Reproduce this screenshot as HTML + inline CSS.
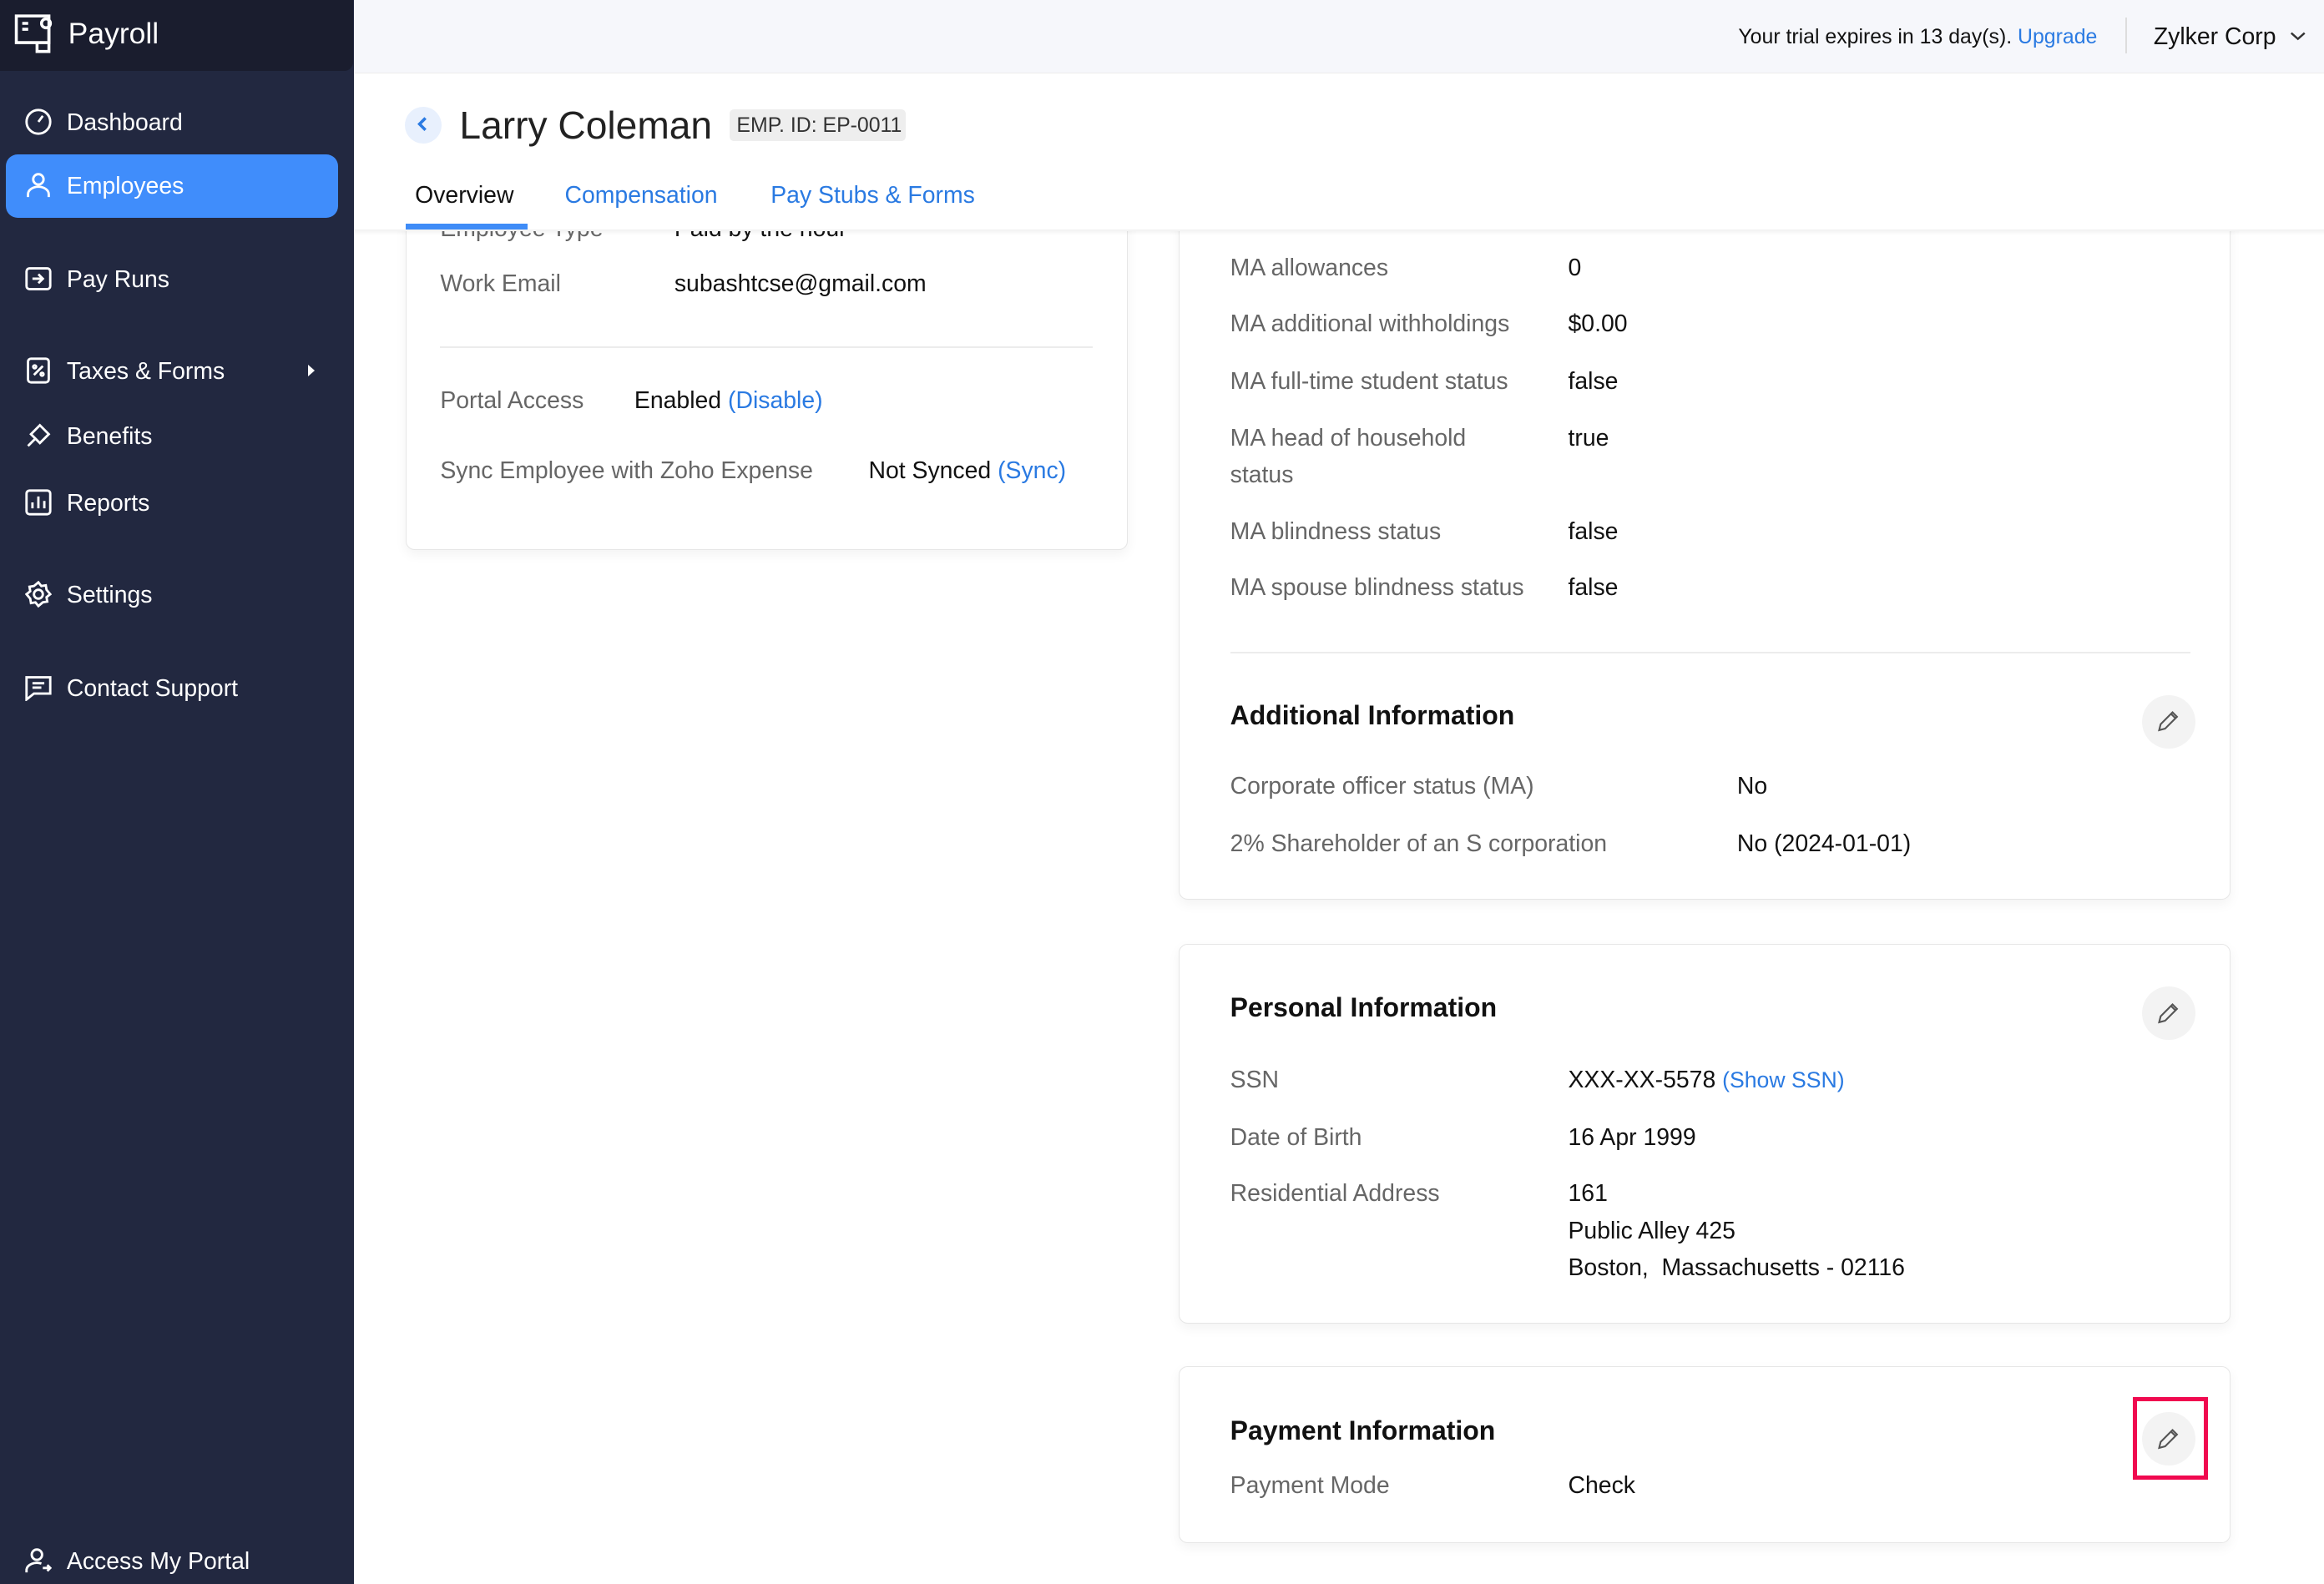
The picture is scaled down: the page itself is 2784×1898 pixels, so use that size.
<!DOCTYPE html>
<html><head><meta charset="utf-8"><style>
html,body{margin:0;padding:0;width:2784px;height:1898px;overflow:hidden;background:#fff}
#r{zoom:1.77551;position:relative;width:1568px;height:1069px;font-family:"Liberation Sans",sans-serif;color:#111}
.a{position:absolute}
.t{position:absolute;line-height:20px;font-size:16px;white-space:nowrap;margin-top:1px}
.s{color:#fff}
.l{color:#666}
.b{color:#2a7ae2}
.h{font-size:18px;font-weight:bold;color:#111}
.card{position:absolute;background:#fff;border:1px solid #e6e6e6;border-radius:6px;box-shadow:0 3px 8px rgba(0,0,0,.05)}
.ed{position:absolute;width:36px;height:36px;border-radius:50%;background:#f3f3f3}
.ed svg{position:absolute;left:10px;top:10px}
.ic{position:absolute;left:17px}
</style></head><body><div id="r">
<div class="a" style="left:0;top:0;width:239px;height:1069px;background:#222840"></div>
<div class="a" style="left:0;top:0;width:238px;height:48px;background:#1a1d2e;border-radius:0 0 6px 0"></div>
<svg class="a" style="left:9px;top:7px" width="30" height="30" viewBox="0 0 30 30" fill="none" stroke="#fff" stroke-width="2"><path d="M2 4h22v18H2z"/><path d="M16 22v6h8V12"/><circle cx="22" cy="9" r="3"/><path d="M6 9h4M6 13h4"/></svg>
<div class="t s" style="left:46px;top:11px;font-size:20px;line-height:22px">Payroll</div>
<div class="a" style="left:4px;top:104px;width:224px;height:43px;background:#408dfb;border-radius:8px"></div>
<svg class="ic" style="top:73px" width="18" height="18" viewBox="0 0 18 18" fill="none" stroke="#fff" stroke-width="1.6"><circle cx="9" cy="9" r="8"/><path d="M9 9l3-4"/></svg>
<div class="t s" style="left:45px;top:72px">Dashboard</div>
<svg class="ic" style="top:116px" width="18" height="18" viewBox="0 0 18 18" fill="none" stroke="#fff" stroke-width="1.6"><circle cx="9" cy="5" r="3.5"/><path d="M2 17v-2a7 5 0 0 1 14 0v2"/></svg>
<div class="t s" style="left:45px;top:115px">Employees</div>
<svg class="ic" style="top:179px" width="18" height="18" viewBox="0 0 18 18" fill="none" stroke="#fff" stroke-width="1.6"><rect x="1" y="2" width="16" height="14" rx="2"/><path d="M5 9h7M9 6l3 3-3 3"/></svg>
<div class="t s" style="left:45px;top:178px">Pay Runs</div>
<svg class="ic" style="top:241px" width="18" height="18" viewBox="0 0 18 18" fill="none" stroke="#fff" stroke-width="1.6"><rect x="2" y="1" width="14" height="16" rx="2"/><path d="M6 12l6-6"/><circle cx="6.5" cy="6.5" r="1"/><circle cx="11.5" cy="11.5" r="1"/></svg>
<div class="t s" style="left:45px;top:240px">Taxes &amp; Forms</div>
<div class="a" style="left:208px;top:246px;border-left:5px solid #fff;border-top:4px solid transparent;border-bottom:4px solid transparent"></div>
<svg class="ic" style="top:285px" width="18" height="18" viewBox="0 0 18 18" fill="none" stroke="#fff" stroke-width="1.6"><path d="M2 16l5-5M7 11l-3-3 6-6 6 6-6 6z"/></svg>
<div class="t s" style="left:45px;top:284px">Benefits</div>
<svg class="ic" style="top:330px" width="18" height="18" viewBox="0 0 18 18" fill="none" stroke="#fff" stroke-width="1.6"><rect x="1" y="1" width="16" height="16" rx="2"/><path d="M5 13V9M9 13V5M13 13V8"/></svg>
<div class="t s" style="left:45px;top:329px">Reports</div>
<svg class="ic" style="top:392px" width="18" height="18" viewBox="0 0 18 18" fill="none" stroke="#fff" stroke-width="1.6"><circle cx="9" cy="9" r="3"/><path d="M9 1l2 2.5 3-.5.5 3L17 9l-2.5 2 .5 3-3 .5L9 17l-2-2.5-3 .5-.5-3L1 9l2.5-2-.5-3 3-.5z"/></svg>
<div class="t s" style="left:45px;top:391px">Settings</div>
<svg class="ic" style="top:455px" width="18" height="18" viewBox="0 0 18 18" fill="none" stroke="#fff" stroke-width="1.6"><path d="M1 2h16v11H6l-5 4z"/><path d="M5 6h8M5 9h6"/></svg>
<div class="t s" style="left:45px;top:454px">Contact Support</div>
<svg class="ic" style="top:1044px" width="18" height="18" viewBox="0 0 18 18" fill="none" stroke="#fff" stroke-width="1.6"><circle cx="8" cy="5" r="3.5"/><path d="M1 17v-2a7 5 0 0 1 10-4M12 14h5M15 12l2 2-2 2"/></svg>
<div class="t s" style="left:45px;top:1043px">Access My Portal</div>
<div class="a" style="left:239px;top:0;width:1329px;height:49px;background:#f6f7fb;border-bottom:1px solid #ececec"></div>
<div class="t" style="right:153px;top:14px;font-size:14px">Your trial expires in 13 day(s). <span class="b">Upgrade</span></div>
<div class="a" style="left:1434px;top:12px;width:1px;height:24px;background:#ddd"></div>
<div class="t" style="left:1453px;top:14px">Zylker Corp</div>
<svg class="a" style="left:1545px;top:20px" width="11" height="8" viewBox="0 0 11 8" fill="none" stroke="#333" stroke-width="1.4"><path d="M1 2l4.5 4L10 2"/></svg>
<div class="a" style="left:273px;top:72px;width:25px;height:25px;border-radius:50%;background:#e8f0fd"></div>
<svg class="a" style="left:281px;top:78px" width="9" height="12" viewBox="0 0 9 12" fill="none" stroke="#2a7ae2" stroke-width="2"><path d="M6 2L2 6l4 4"/></svg>
<div class="t" style="left:310px;top:69px;font-size:26px;line-height:30px;color:#222">Larry Coleman</div>
<div class="a" style="left:492px;top:74px;width:119px;height:21px;background:#eee;border-radius:3px"></div>
<div class="t" style="left:497px;top:74px;font-size:14px;color:#333">EMP. ID: EP-0011</div>
<div class="t" style="left:280px;top:121px;color:#111">Overview</div>
<div class="t b" style="left:381px;top:121px">Compensation</div>
<div class="t b" style="left:520px;top:121px">Pay Stubs &amp; Forms</div>
<div class="a" style="left:239px;top:156px;width:1329px;height:913px;overflow:hidden">
 <div style="position:absolute;left:-239px;top:-156px;width:1568px;height:1069px">
  <div class="card" style="left:274px;top:100px;width:486px;height:270px"></div>
  <div class="t l" style="left:297px;top:144px">Employee Type</div>
  <div class="t" style="left:455px;top:144px">Paid by the hour</div>
  <div class="t l" style="left:297px;top:181px">Work Email</div>
  <div class="t" style="left:455px;top:181px">subashtcse@gmail.com</div>
  <div class="a" style="left:297px;top:234px;width:440px;height:1px;background:#ececec"></div>
  <div class="t l" style="left:297px;top:260px">Portal Access</div>
  <div class="t" style="left:428px;top:260px">Enabled <span class="b">(Disable)</span></div>
  <div class="t l" style="left:297px;top:307px">Sync Employee with Zoho Expense</div>
  <div class="t" style="left:586px;top:307px">Not Synced <span class="b">(Sync)</span></div>

  <div class="card" style="left:795px;top:100px;width:709px;height:506px"></div>
  <div class="t l" style="left:830px;top:170px">MA allowances</div><div class="t" style="left:1058px;top:170px">0</div>
  <div class="t l" style="left:830px;top:208px">MA additional withholdings</div><div class="t" style="left:1058px;top:208px">$0.00</div>
  <div class="t l" style="left:830px;top:247px">MA full-time student status</div><div class="t" style="left:1058px;top:247px">false</div>
  <div class="t l" style="left:830px;top:285px">MA head of household</div><div class="t l" style="left:830px;top:310px">status</div><div class="t" style="left:1058px;top:285px">true</div>
  <div class="t l" style="left:830px;top:348px">MA blindness status</div><div class="t" style="left:1058px;top:348px">false</div>
  <div class="t l" style="left:830px;top:386px">MA spouse blindness status</div><div class="t" style="left:1058px;top:386px">false</div>
  <div class="a" style="left:830px;top:440px;width:648px;height:1px;background:#ececec"></div>
  <div class="t h" style="left:830px;top:472px">Additional Information</div>
  <div class="ed" style="left:1445px;top:469px"><svg width="16" height="16" viewBox="0 0 16 16" fill="none" stroke="#555" stroke-width="1.2"><path d="M2 14l1-4 8-8 3 3-8 8z M10 3l3 3"/></svg></div>
  <div class="t l" style="left:830px;top:520px">Corporate officer status (MA)</div><div class="t" style="left:1172px;top:520px">No</div>
  <div class="t l" style="left:830px;top:559px">2% Shareholder of an S corporation</div><div class="t" style="left:1172px;top:559px">No (2024-01-01)</div>

  <div class="card" style="left:795px;top:637px;width:709px;height:255px"></div>
  <div class="t h" style="left:830px;top:669px">Personal Information</div>
  <div class="ed" style="left:1445px;top:666px"><svg width="16" height="16" viewBox="0 0 16 16" fill="none" stroke="#555" stroke-width="1.2"><path d="M2 14l1-4 8-8 3 3-8 8z M10 3l3 3"/></svg></div>
  <div class="t l" style="left:830px;top:718px">SSN</div><div class="t" style="left:1058px;top:718px">XXX-XX-5578 <span class="b" style="font-size:15px">(Show SSN)</span></div>
  <div class="t l" style="left:830px;top:757px">Date of Birth</div><div class="t" style="left:1058px;top:757px">16 Apr 1999</div>
  <div class="t l" style="left:830px;top:795px">Residential Address</div>
  <div class="t" style="left:1058px;top:795px">161</div>
  <div class="t" style="left:1058px;top:820px">Public Alley 425</div>
  <div class="t" style="left:1058px;top:845px">Boston,&nbsp; Massachusetts - 02116</div>

  <div class="card" style="left:795px;top:922px;width:709px;height:118px"></div>
  <div class="t h" style="left:830px;top:955px">Payment Information</div>
  <div class="ed" style="left:1445px;top:953px"><svg width="16" height="16" viewBox="0 0 16 16" fill="none" stroke="#555" stroke-width="1.2"><path d="M2 14l1-4 8-8 3 3-8 8z M10 3l3 3"/></svg></div>
  <div class="a" style="left:1439px;top:943px;width:45px;height:50px;border:3px solid #f0094f"></div>
  <div class="t l" style="left:830px;top:992px">Payment Mode</div><div class="t" style="left:1058px;top:992px">Check</div>
 </div>
</div>
<div class="a" style="left:239px;top:155px;width:1329px;height:4px;background:linear-gradient(rgba(0,0,0,.06),rgba(0,0,0,0))"></div>
<div class="a" style="left:274px;top:151px;width:82px;height:4px;background:#3f8cf7"></div>
</div></body></html>
